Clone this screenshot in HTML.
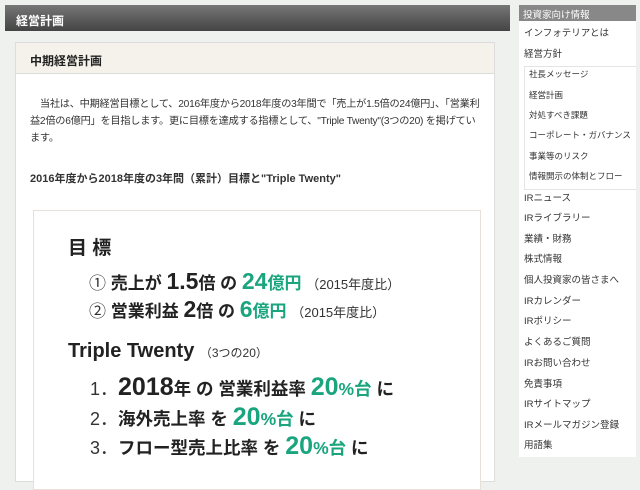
<!DOCTYPE html>
<html><head><meta charset="utf-8"><style>
*{margin:0;padding:0;box-sizing:border-box}
body{width:640px;height:462px;overflow:hidden;background:#eef1ee;font-family:"Liberation Sans","Noto Sans CJK JP",sans-serif;color:#333;position:relative}
.hdr{position:absolute;left:5px;top:5px;width:505px;height:26px;background:linear-gradient(#777,#444);color:#fff;font-size:12px;font-weight:bold;padding:7px 0 0 11px}
.panel{position:absolute;left:15px;top:42px;width:480px;height:440px;background:#fff;border:1px solid #ddd}
.ph{height:31px;background:#f4f2ea;border-bottom:1px solid #ddd;font-size:12px;font-weight:bold;padding:9px 0 0 14px;color:#222}
.p{position:absolute;left:14px;top:53px;width:470px;font-size:10.2px;line-height:17px;color:#333;white-space:nowrap;letter-spacing:-0.25px}
.sub{position:absolute;left:14px;top:127px;font-size:11px;font-weight:bold;color:#333}
.img{position:absolute;left:17px;top:167px;width:448px;height:280px;border:1px solid #e8e0d8;background:#fff}
.img div{position:absolute;white-space:nowrap;font-weight:bold;color:#222}
.g{color:#1aa57f}
.n{font-weight:normal;font-size:12px;color:#333}
.side{position:absolute;left:519px;top:5px;width:117px;height:452px;background:#fff}
.sh{height:16px;background:#888;color:#fff;font-size:9.5px;padding:2px 0 0 4px}
.it{position:absolute;left:5px;font-size:9.5px;color:#333;white-space:nowrap}
.box{position:absolute;left:5px;top:61px;width:112px;height:124px;border:1px solid #e4e4e4;border-right:none}
.si{position:absolute;left:10px;font-size:8.5px;color:#333;white-space:nowrap}
</style></head><body>
<div class="hdr">経営計画</div>
<div class="panel">
<div class="ph">中期経営計画</div>
<div class="p">　当社は、中期経営目標として、2016年度から2018年度の3年間で「売上が1.5倍の24億円」、「営業利<br>益2倍の6億円」を目指します。更に目標を達成する指標として、"Triple Twenty"(3つの20) を掲げてい<br>ます。</div>
<div class="sub">2016年度から2018年度の3年間（累計）目標と"Triple Twenty"</div>
<div class="img">
<div style="left:34px;top:22px;font-size:19px">目 標</div>
<div style="left:55px;top:57px;font-size:17px"><span class="n" style="font-size:17px">①</span> 売上が <span style="font-size:23px">1.5</span>倍 の <span class="g" style="font-size:23px">24</span><span class="g">億円</span> <span class="n" style="font-size:13px">（2015年度比）</span></div>
<div style="left:55px;top:85px;font-size:17px"><span class="n" style="font-size:17px">②</span> 営業利益 <span style="font-size:23px">2</span>倍 の <span class="g" style="font-size:23px">6</span><span class="g">億円</span> <span class="n" style="font-size:13px">（2015年度比）</span></div>
<div style="left:34px;top:129px;font-size:20px">Triple Twenty <span class="n">（3つの20）</span></div>
<div style="left:56px;top:162px;font-size:17.5px"><span class="n" style="font-size:18px">1．</span><span style="font-size:25px">2018</span>年 の 営業利益率 <span class="g" style="font-size:25px">20</span><span class="g">%台</span> に</div>
<div style="left:56px;top:192px;font-size:17.5px"><span class="n" style="font-size:18px">2．</span>海外売上率 を <span class="g" style="font-size:25px">20</span><span class="g">%台</span> に</div>
<div style="left:56px;top:221px;font-size:17.5px"><span class="n" style="font-size:18px">3．</span>フロー型売上比率 を <span class="g" style="font-size:25px">20</span><span class="g">%台</span> に</div>
</div>
</div>
<div class="side">
<div class="sh">投資家向け情報</div>
<div class="it" style="top:20px">インフォテリアとは</div>
<div class="it" style="top:41px">経営方針</div>
<div class="box"></div>
<div class="si" style="top:63px">社長メッセージ</div>
<div class="si" style="top:84px">経営計画</div>
<div class="si" style="top:104px">対処すべき課題</div>
<div class="si" style="top:124px">コーポレート・ガバナンス</div>
<div class="si" style="top:145px">事業等のリスク</div>
<div class="si" style="top:165px">情報開示の体制とフロー</div>
<div class="it" style="top:185px">IRニュース</div>
<div class="it" style="top:205px">IRライブラリー</div>
<div class="it" style="top:226px">業績・財務</div>
<div class="it" style="top:246px">株式情報</div>
<div class="it" style="top:267px">個人投資家の皆さまへ</div>
<div class="it" style="top:288px">IRカレンダー</div>
<div class="it" style="top:308px">IRポリシー</div>
<div class="it" style="top:329px">よくあるご質問</div>
<div class="it" style="top:350px">IRお問い合わせ</div>
<div class="it" style="top:371px">免責事項</div>
<div class="it" style="top:391px">IRサイトマップ</div>
<div class="it" style="top:412px">IRメールマガジン登録</div>
<div class="it" style="top:432px">用語集</div>
</div>
</body></html>
